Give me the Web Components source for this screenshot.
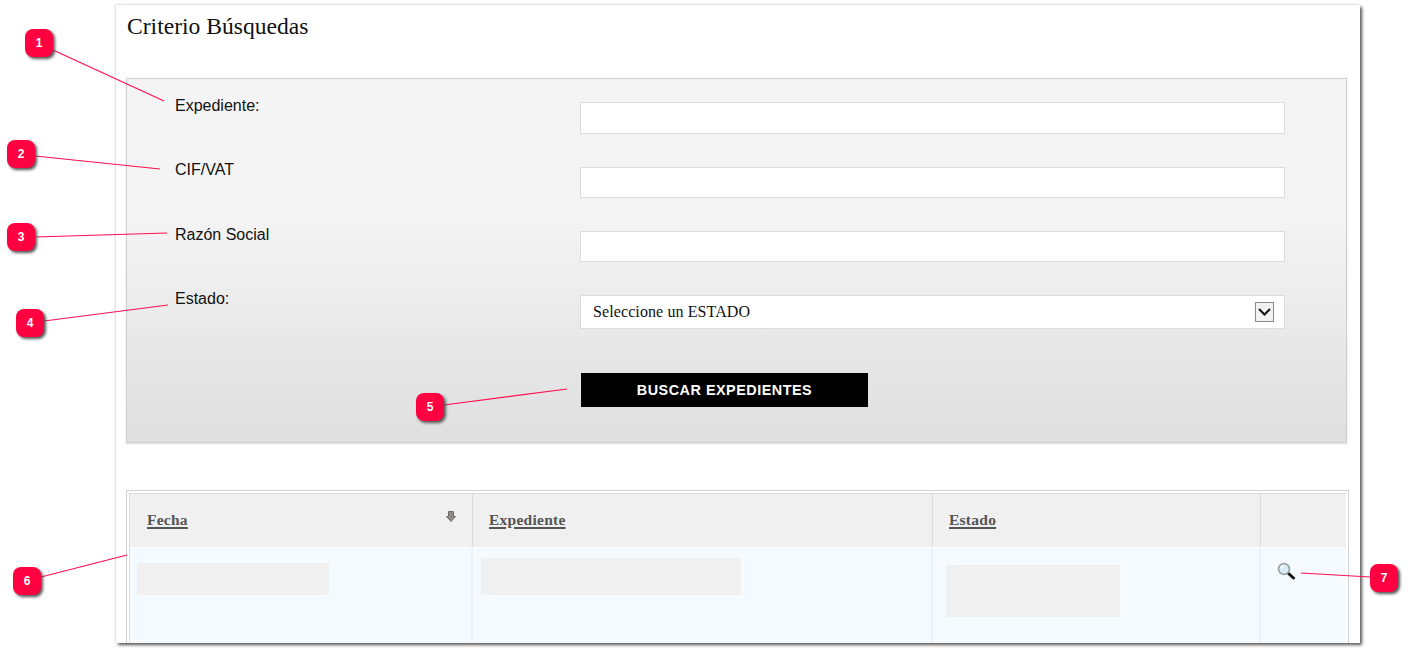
<!DOCTYPE html>
<html lang="es">
<head>
<meta charset="utf-8">
<title>Criterio Búsquedas</title>
<style>
  html, body { margin: 0; height: 659px; overflow: hidden; background: #fff; }
  body { position: relative; font-family: "Liberation Sans", Arial, sans-serif; }
</style>
</head>
<body>
<search-sheet>
  <search-form>
    <form-row label="Expediente:"><text-field tall></text-field></form-row>
    <form-row label="CIF/VAT" style="--label-top:-6px"><text-field></text-field></form-row>
    <form-row label="Razón Social"><text-field></text-field></form-row>
    <form-row label="Estado:"><state-select>Seleccione un ESTADO</state-select></form-row>
    <form-row><search-button>BUSCAR EXPEDIENTES</search-button></form-row>
  </search-form>
  <results-table></results-table>
</search-sheet>

<call-out n="1" x="25" y="29" x1="53" y1="50" x2="164" y2="101"></call-out>
<call-out n="2" x="7" y="140" x1="35" y1="156" x2="160" y2="169"></call-out>
<call-out n="3" x="7" y="223" x1="35" y1="237" x2="167" y2="233"></call-out>
<call-out n="4" x="16" y="309" x1="44" y1="321" x2="168" y2="305"></call-out>
<call-out n="5" x="416" y="393" x1="444" y1="405" x2="567" y2="389"></call-out>
<call-out n="6" x="13" y="567" x1="41" y1="577" x2="127" y2="555"></call-out>
<call-out n="7" x="1370" y="564" x1="1370" y1="577" x2="1301" y2="573"></call-out>

<script>
class SearchSheet extends HTMLElement {
  constructor() {
    super();
    this.attachShadow({ mode: 'open' })
  }
  connectedCallback() {
    this.shadowRoot.innerHTML = `
    <style>
      :host{
        display: block;
        box-sizing: border-box;
        width: 1244px;
        height: 638px;
        margin: 5px 0 0 116px;
        padding: 0 10px;
        background: #fff;
        overflow: hidden;
        box-shadow: 2px 2px 3px #555, -1px -1px 2px #e6e6e6;
      }
      h1{
        margin: 0;
        padding: 7px 0 0 1px;
        height: 73px;
        box-sizing: border-box;
        font: normal 23.6px/28px "Liberation Serif", Georgia, serif;
        color: #111;
      }
    </style>
    <h1>Criterio Búsquedas</h1>
    <slot></slot>`
  }
}

class SearchForm extends HTMLElement {
  constructor() {
    super();
    this.attachShadow({ mode: 'open' })
  }
  connectedCallback() {
    this.shadowRoot.innerHTML = `
    <style>
      :host{
        display: flex;
        flex-direction: column;
        gap: 33px;
        box-sizing: border-box;
        width: 1221px;
        height: 365px;
        padding-top: 23px;
        border: 1px solid #cfcfcf;
        background: linear-gradient(#f4f4f4 0, #f4f4f4 36%, #dfdfdf 100%);
        box-shadow: 0 1px 2px #ddd;
      }
    </style>
    <slot></slot>`
  }
}

class FormRow extends HTMLElement {
  constructor() {
    super();
    this.attachShadow({ mode: 'open' })
  }
  connectedCallback() {
    this.shadowRoot.innerHTML = `
    <style>
      :host{
        display: grid;
        grid-template-columns: 453px 705px;
        align-items: start;
      }
      :host(:last-child){
        margin-top: 11px;
      }
      label{
        margin: var(--label-top, -5px) 0 0 48px;
        font-size: 16px;
        line-height: 18px;
        color: #111;
      }
    </style>
    <label>${this.getAttribute('label') || ''}</label>
    <slot></slot>`
  }
}

class TextField extends HTMLElement {
  constructor() {
    super();
    this.attachShadow({ mode: 'open' })
  }
  connectedCallback() {
    this.shadowRoot.innerHTML = `
    <style>
      :host{
        display: block;
        height: 31px;
      }
      :host([tall]){
        height: 32px;
      }
      input{
        display: block;
        box-sizing: border-box;
        width: 100%;
        height: 100%;
        padding: 0 12px;
        outline: none;
        border: 1px solid #dcdcdc;
        background: #fff;
      }
    </style>
    <input type="text">`
  }
}

class StateSelect extends HTMLElement {
  constructor() {
    super();
    this.attachShadow({ mode: 'open' })
  }
  connectedCallback() {
    this.shadowRoot.innerHTML = `
    <style>
      :host{
        display: flex;
        align-items: center;
        justify-content: space-between;
        box-sizing: border-box;
        height: 34px;
        padding: 0 10px 0 12px;
        border: 1px solid #dcdcdc;
        background: #fff;
        font: 16px "Liberation Serif", Georgia, serif;
        letter-spacing: .1px;
        color: #111;
      }
      svg{
        display: block;
      }
    </style>
    <span><slot></slot></span>
    <svg width="19" height="20" viewBox="0 0 19 20">
      <rect x=".5" y=".5" width="18" height="19" fill="#f2f2f2" stroke="#8a8a8a"/>
      <path d="M4 7 9.5 12.5 15 7" fill="none" stroke="#111" stroke-width="2"/>
    </svg>`
  }
}

class SearchButton extends HTMLElement {
  constructor() {
    super();
    this.attachShadow({ mode: 'open' })
  }
  connectedCallback() {
    this.shadowRoot.innerHTML = `
    <style>
      :host{
        display: block;
        width: 288px;
        margin-left: 1px;
      }
      button{
        display: block;
        width: 287px;
        height: 34px;
        padding: 0;
        outline: none;
        border: none;
        background: #000;
        color: #fff;
        font: bold 14.4px "Liberation Sans", Arial, sans-serif;
        letter-spacing: .5px;
      }
    </style>
    <button><slot></slot></button>`
  }
}

class ResultsTable extends HTMLElement {
  constructor() {
    super();
    this.attachShadow({ mode: 'open' })
  }
  connectedCallback() {
    this.shadowRoot.innerHTML = `
    <style>
      :host{
        display: block;
        box-sizing: border-box;
        width: 1223px;
        margin-top: 47px;
        padding: 2px 2px 0;
        border: 1px solid #d2d2d2;
        border-bottom: none;
        height: 153px;
      }
      .grid{
        display: grid;
        grid-template-columns: 343px 460px 328px 85px;
        grid-template-rows: 54px 1fr;
        height: 100%;
        border-top: 1px solid #ddd;
        border-left: 1px solid #ddd;
        border-right: 1px solid #ddd;
        box-sizing: border-box;
        width: 100%;
      }
      .head{
        display: flex;
        justify-content: space-between;
        box-sizing: border-box;
        padding: 17px 16px 0 17px;
        background: #f0f0f0;
        border-right: 1px solid #dcdcdc;
        margin-bottom: 1px;
        font: bold 15.5px/18px "Liberation Serif", Georgia, serif;
        color: #555;
        letter-spacing: .25px;
      }
      .head:nth-child(2){ padding-left: 16px; }
      .head:nth-child(3){ padding-left: 16px; }
      .head:nth-child(4){ border-right: none; }
      .head u{
        text-decoration-thickness: 2px;
        text-underline-offset: 2px;
      }
      .head svg{
        margin-top: -1px;
        margin-right: -1px;
      }
      .cell{
        box-sizing: border-box;
        background: #f4fafd;
        border-right: 2px solid #eef1f2;
        padding: 15px 0 0 7px;
      }
      .cell:last-child{
        border-right: none;
        padding: 14px 0 0 16px;
      }
      .cell:nth-child(6){ padding: 10px 0 0 8px; }
      .cell:nth-child(7){ padding: 17px 0 0 13px; }
      .blank{
        background: #f0f0f0;
      }
    </style>
    <div class="grid">
      <div class="head"><u>Fecha</u>
        <svg width="12" height="13" viewBox="0 0 12 13">
          <path d="M3.5 1.5h5v5h2l-4.5 5-4.5-5h2z" fill="#8d8d85" stroke="#6e6e66"/>
        </svg>
      </div>
      <div class="head"><u>Expediente</u></div>
      <div class="head"><u>Estado</u></div>
      <div class="head"></div>
      <div class="cell"><div class="blank" style="width:192px;height:32px"></div></div>
      <div class="cell"><div class="blank" style="width:260px;height:37px"></div></div>
      <div class="cell"><div class="blank" style="width:174px;height:52px"></div></div>
      <div class="cell">
        <svg width="19" height="18" viewBox="0 0 19 18" style="display:block">
          <path d="M11.5 11.5l5 4.5" stroke="#111" stroke-width="3" stroke-linecap="round"/>
          <circle cx="7" cy="7" r="5.4" fill="#dcecf6" stroke="#98a4ac" stroke-width="1.7"/>
          <path d="M3.8 6.5a3.3 3.3 0 0 1 3.2-2.8" fill="none" stroke="#fff" stroke-width="1.4"/>
        </svg>
      </div>
    </div>`
  }
}

class CallOut extends HTMLElement {
  constructor() {
    super();
    this.attachShadow({ mode: 'open' })
  }
  connectedCallback() {
    let a = (name) => this.getAttribute(name)
    this.shadowRoot.innerHTML = `
    <style>
      :host{
        display: block;
      }
      svg{
        position: absolute;
        left: 0;
        top: 0;
        width: 1409px;
        height: 659px;
        pointer-events: none;
      }
      div{
        position: absolute;
        left: ${a('x')}px;
        top: ${a('y')}px;
        width: 28px;
        height: 28px;
        border-radius: 8px;
        background: #ff0040;
        box-shadow: 2px 2px 3px #555;
        color: #fff;
        font: bold 12px/28px "Liberation Sans", Arial, sans-serif;
        text-align: center;
      }
    </style>
    <svg viewBox="0 0 1409 659">
      <line x1="${a('x1')}" y1="${a('y1')}" x2="${a('x2')}" y2="${a('y2')}" stroke="#ff0f50" stroke-width="1.2"/>
    </svg>
    <div>${a('n')}</div>`
  }
}

customElements.define('search-sheet', SearchSheet);
customElements.define('search-form', SearchForm);
customElements.define('form-row', FormRow);
customElements.define('text-field', TextField);
customElements.define('state-select', StateSelect);
customElements.define('search-button', SearchButton);
customElements.define('results-table', ResultsTable);
customElements.define('call-out', CallOut);
</script>
</body>
</html>
